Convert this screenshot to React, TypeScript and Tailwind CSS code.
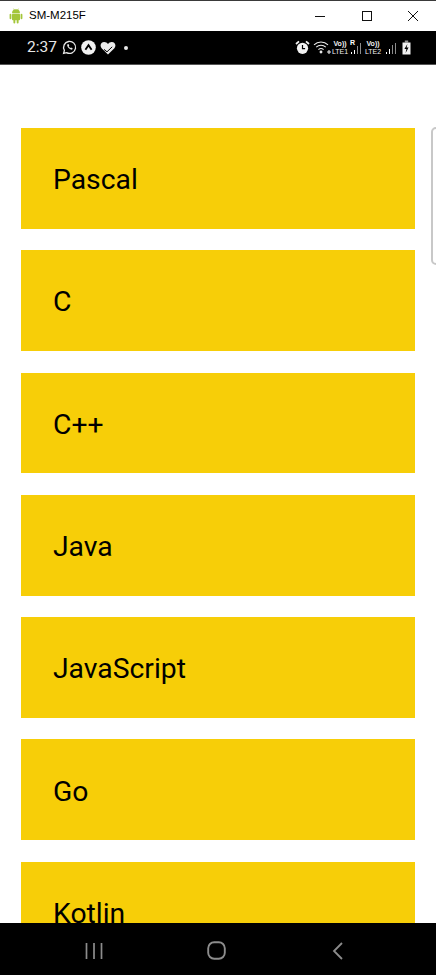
import React from "react";

const languages = ["Pascal", "C", "C++", "Java", "JavaScript", "Go", "Kotlin"];

const Signal = ({ bars }: { bars: number[] }) => (
  <svg width="14" height="14" viewBox="0 0 14 14" fill="none" stroke="white" strokeWidth="1">
    {[0, 1, 2, 3].map((i) => (
      <line
        key={i}
        x1={2.5 + i * 3}
        x2={2.5 + i * 3}
        y1={13 - bars[i]}
        y2={13}
        opacity={i > 1 ? 0.55 : 1}
      />
    ))}
  </svg>
);

const VoLte = ({ label }: { label: string }) => (
  <div className="w-[16px] flex flex-col items-center text-[#f0f0f0] text-[7px] leading-[8px] font-bold font-['Liberation_Sans',sans-serif]">
    <span>Vo))</span>
    <span className="font-normal">{label}</span>
  </div>
);

const TitleBar = () => (
  <div className="h-[31px] shrink-0 bg-white border-t border-[#3a3a3a] flex items-center font-['Liberation_Sans',sans-serif]">
    <svg className="ml-[9px]" width="14" height="16" viewBox="0 0 14 16" fill="#a4c639">
      <path d="M3 5.2a4 4 0 0 1 8 0z" />
      <rect x="3" y="5.8" width="8" height="6.4" rx="0.8" />
      <rect x="0.6" y="5.8" width="1.8" height="5.4" rx="0.9" />
      <rect x="11.6" y="5.8" width="1.8" height="5.4" rx="0.9" />
      <rect x="4.4" y="11" width="1.9" height="4.4" rx="0.9" />
      <rect x="7.7" y="11" width="1.9" height="4.4" rx="0.9" />
      <path d="M4.5 0.6l1 1.8M9.5 0.6l-1 1.8" stroke="#a4c639" strokeWidth="0.6" />
    </svg>
    <span className="ml-[6px] text-[11.5px] text-black">SM-M215F</span>
    <div className="ml-auto flex items-center">
      <svg width="12" height="12" viewBox="0 0 12 12" stroke="#111" fill="none" className="mr-[35px]">
        <line x1="1" y1="6.5" x2="11" y2="6.5" />
      </svg>
      <svg width="12" height="12" viewBox="0 0 12 12" stroke="#111" fill="none" className="mr-[34px]">
        <rect x="1.5" y="1.5" width="9" height="9" />
      </svg>
      <svg width="12" height="12" viewBox="0 0 12 12" stroke="#111" fill="none" className="mr-[17px]">
        <path d="M1 1l10 10M11 1L1 11" />
      </svg>
    </div>
  </div>
);

const StatusBar = () => (
  <div className="h-[34px] shrink-0 bg-black border-b border-[#555] flex items-center pl-[27px] pr-[25px]">
    <span className="text-[15.5px] text-[#e8e8e8] font-['Roboto',sans-serif]">2:37</span>
    <svg className="ml-[5px]" width="15" height="15" viewBox="0 0 15 15" fill="none" stroke="#e8e8e8" strokeWidth="1.3">
      <path d="M1.6 13.4l.8-3A6 6 0 1 1 4.6 12.6z" />
      <path d="M5.2 4.6c-.6 2 2.6 5.4 5 5l.6-1.2-1.7-.9-.7.6c-.8-.4-1.3-1-1.7-1.8l.6-.7-.8-1.7z" fill="#e8e8e8" stroke="none" />
    </svg>
    <svg className="ml-[4px]" width="15" height="15" viewBox="0 0 15 15">
      <circle cx="7.5" cy="7.5" r="7.3" fill="#f2f2f2" />
      <path d="M4.4 9.8l3.1-4.6 3.1 4.6" fill="none" stroke="#000" strokeWidth="1.8" />
    </svg>
    <svg className="ml-[4px]" width="16" height="14" viewBox="0 0 16 14">
      <path d="M8 13.4L1.6 7.2C-.6 4.6 1 1 4.2 1 5.8 1 7.2 1.8 8 3c.8-1.2 2.2-2 3.8-2 3.2 0 4.8 3.6 2.6 6.2z" fill="#ececec" />
      <path d="M4 8.4l3 2.4 5.2-5" fill="none" stroke="#000" strokeWidth="1" />
    </svg>
    <div className="ml-[8px] w-[4px] h-[4px] rounded-full bg-[#e8e8e8]" />

    <div className="ml-auto flex items-center">
      <svg width="15" height="15" viewBox="0 0 15 15">
        <circle cx="7.5" cy="8.3" r="5.6" fill="#f2f2f2" />
        <path d="M1 4l3-2.6M14 4l-3-2.6" stroke="#f2f2f2" strokeWidth="1.8" />
        <path d="M7.5 5v3.6h2.6" fill="none" stroke="#000" strokeWidth="1.2" />
      </svg>
      <svg className="ml-[3px]" width="19" height="15" viewBox="0 0 19 15" fill="none" stroke="#ececec" strokeWidth="1.1">
        <path d="M1 4.8a10 10 0 0 1 14 0" />
        <path d="M3.2 7.2a7 7 0 0 1 9.6 0" />
        <path d="M5.4 9.6a4 4 0 0 1 5.2 0" />
        <circle cx="8" cy="12" r="0.9" fill="#ececec" />
        <path d="M14 12h4M16 10v4" />
      </svg>
      <VoLte label="LTE1" />
      <div className="relative ml-[1px]">
        <Signal bars={[2, 4, 8, 11]} />
        <span className="absolute -top-[2px] left-[1px] text-[7px] leading-[8px] font-bold text-white font-['Liberation_Sans',sans-serif]">R</span>
      </div>
      <div className="ml-[2px]"><VoLte label="LTE2" /></div>
      <div className="ml-[3px]"><Signal bars={[2, 5, 9, 11]} /></div>
      <svg className="ml-[4px]" width="9" height="15" viewBox="0 0 9 15">
        <rect x="2.8" y="0.5" width="3.4" height="2" fill="#999" />
        <rect x="0.5" y="2.5" width="8" height="12" fill="#f2f2f2" />
        <path d="M5.4 4L2.4 9h2l-.8 4 3-5.4h-2z" fill="#000" />
      </svg>
    </div>
  </div>
);

const NavBar = () => (
  <div className="h-[52px] shrink-0 bg-black flex items-center pt-[3px]">
    <svg className="ml-[85px]" width="18" height="18" viewBox="0 0 18 18" stroke="#8c8c8c" strokeWidth="1.7">
      <path d="M1.5 1v16M9 1v16M16.5 1v16" />
    </svg>
    <svg className="ml-[104px]" width="19" height="19" viewBox="0 0 19 19" fill="none" stroke="#8c8c8c" strokeWidth="1.9">
      <rect x="1.2" y="1.2" width="16.6" height="16.6" rx="6" />
    </svg>
    <svg className="ml-[106px]" width="12" height="18" viewBox="0 0 12 18" fill="none" stroke="#8c8c8c" strokeWidth="1.8">
      <path d="M10 1L2 9l8 8" />
    </svg>
  </div>
);

export default function App() {
  return (
    <div className="relative h-[975px] w-[436px] flex flex-col overflow-hidden bg-white font-['Roboto',sans-serif]">
      <TitleBar />
      <StatusBar />
      <div className="flex-1 overflow-hidden flex flex-col gap-[21.375px] pt-[63px] px-[21px]">
        {languages.map((name) => (
          <div key={name} className="h-[100.9px] shrink-0 bg-[#f7ce08] flex items-center pl-[32px] pt-[4px] text-[28.3px] text-black">
            {name}
          </div>
        ))}
      </div>
      {/* pull tab on the right edge */}
      <div className="absolute left-[431px] top-[127px] h-[138px] w-[10px] rounded-l-[5px] border-2 border-[#c8c8c8] bg-white" />
      <NavBar />
    </div>
  );
}
